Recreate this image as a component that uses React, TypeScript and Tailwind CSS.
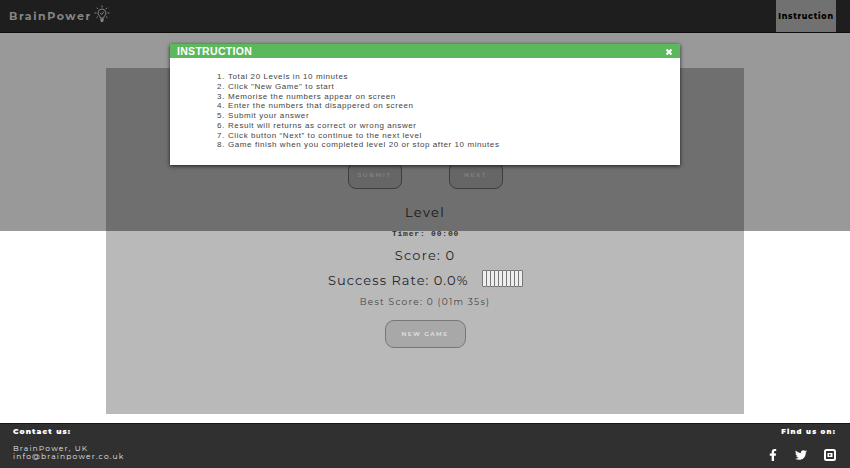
import React from "react";
import { FaFacebookF, FaTwitter } from "react-icons/fa";

const instructions = [
  "Total 20 Levels in 10 minutes",
  "Click \"New Game\" to start",
  "Memorise the numbers appear on screen",
  "Enter the numbers that disappered on screen",
  "Submit your answer",
  "Result will returns as correct or wrong answer",
  "Click button “Next” to continue to the next level",
  "Game finish when you completed level 20 or stop after 10 minutes",
];

function Bulb() {
  return (
    <svg viewBox="0 0 16 18" className="ml-[2px] h-[18px] w-4" fill="none" stroke="currentColor" strokeWidth="1">
      <path d="M8 4a4 4 0 0 0-2.5 7.1c.6.5.8 1 .8 1.9h3.4c0-.9.2-1.4.8-1.9A4 4 0 0 0 8 4Z" />
      <path d="m6.2 8 1.4 1.5L10 6.5" />
      <path d="M8 .5v2M2.8 2.7l1.4 1.4M13.2 2.7l-1.4 1.4M.5 8h2M15.5 8h-2M2.5 12.7 4 11.6M13.5 12.7 12 11.6" />
      <path d="M6.3 14.5h3.4M6.8 16h2.4" strokeWidth="1.8" />
    </svg>
  );
}

function Header() {
  return (
    <header className="flex h-[33px] shrink-0 justify-between border-b border-[#171717] bg-[#323232] pl-[9px] pr-[14px]">
      <div className="flex items-center pb-1 text-[#dedede]">
        <span className="w-[83px] whitespace-nowrap pt-1 text-[11px] font-bold leading-none tracking-[1.55px]">BrainPower</span>
        <Bulb />
      </div>
      <nav className="flex w-[60px] items-center justify-center bg-[#bdbdbd] text-[8px] font-extrabold tracking-[0.75px] text-black">
        <span className="whitespace-nowrap">Instruction</span>
      </nav>
    </header>
  );
}

function Game() {
  return (
    <main className="mx-auto mt-[35px] flex h-[346px] w-[638px] shrink-0 flex-col items-center bg-[#b9b9b9] text-[#252525]">
      <div className="mt-[94px] flex gap-[47px] text-[6px] font-semibold tracking-[1.65px] text-[#d8d8d8]">
        <button className="h-[27px] w-[54px] rounded-[8px] border border-[#686868] bg-[#aaa]">SUBMIT</button>
        <button className="h-[27px] w-[54px] rounded-[8px] border border-[#686868] bg-[#aaa]">NEXT</button>
      </div>
      <p className="mt-[15px] h-4 text-[13px] leading-4 tracking-[1.3px]">Level</p>
      <p className="mt-[8px] h-3 pl-px font-['Liberation_Mono',monospace] text-[8px] font-bold leading-3 tracking-[0.8px] text-[#333]">Timer: 00:00</p>
      <p className="mt-[7px] h-4 text-[13px] leading-4 tracking-[1.2px]">Score: 0</p>
      <div className="mt-[9px] flex h-4 items-center">
        <span className="w-[154px] whitespace-nowrap text-[13px] leading-4 tracking-[1.05px]">Success Rate: 0.0%</span>
        <div className="mt-[-3px] flex">
          {Array.from({ length: 10 }, (_, i) => (
            <span key={i} className="-mr-px h-[17px] w-[5px] rounded-[1px] border border-[#777] bg-[#eee]" />
          ))}
        </div>
      </div>
      <p className="mt-[8px] h-3 text-[9px] leading-3 tracking-[1.25px] text-[#444]">Best Score: 0 (01m 35s)</p>
      <button className="mt-[12px] h-7 w-[81px] rounded-[9px] border border-[#777] bg-[#a8a8a8] text-[6px] font-semibold tracking-[1.35px] text-[#e0e0e0]">NEW GAME</button>
    </main>
  );
}

function Footer() {
  return (
    <footer className="mt-[9px] flex h-[45px] shrink-0 justify-between border-t border-[#151515] bg-[#303030] pl-[13px] pr-[14px] text-white">
      <div className="text-[7.5px] tracking-[1.2px]">
        <h2 className="mt-[3px] text-[7.5px] font-black leading-[10px] tracking-[1.1px]">Contact us:</h2>
        <p className="mt-[8px] whitespace-nowrap leading-[8px] text-[#e5e5e5]">BrainPower, UK<br />info@brainpower.co.uk</p>
      </div>
      <div className="flex flex-col items-end">
        <h2 className="mt-[3px] whitespace-nowrap text-[7px] font-black leading-[10px] tracking-[1.2px]">Find us on:</h2>
        <div className="mt-[12px] flex w-[67px] items-center justify-between">
          <FaFacebookF size={12} className="w-[8px]" />
          <FaTwitter size={12} />
          <svg viewBox="0 0 12 12" className="h-3 w-3"><rect x="1" y="1" width="10" height="10" rx="1.5" fill="none" stroke="white" strokeWidth="2" /><path fill="white" d="M3.5 4h5v4h-5z" /><path fill="#303030" d="m5.2 4.8 2 1.2-2 1.2Z" /></svg>
        </div>
      </div>
    </footer>
  );
}

export default function App() {
  return (
    <div className="relative flex h-[468px] w-[850px] flex-col overflow-hidden bg-white font-['Montserrat',Inter,sans-serif]">
      <Header />
      <Game />
      <Footer />
      <div className="absolute inset-x-0 top-0 h-[231px] bg-black/40">
        <section className="ml-[170px] mt-[44px] h-[121px] w-[510px] bg-white font-['Liberation_Sans',Arial,sans-serif] shadow-[0_1px_4px_rgba(0,0,0,0.75)]">
          <div className="flex h-[14px] items-center justify-between bg-[#5cb85c] pl-[7px] pr-[7px] text-white">
            <h1 className="text-[10.5px] font-bold leading-[14px] tracking-[0.3px]">INSTRUCTION</h1>
            <button aria-label="Close" className="pt-[2px]">
              <svg viewBox="0 0 8 8" className="h-2 w-2" stroke="white" strokeWidth="2"><path d="m1.5 1.5 5 5m0-5-5 5" /></svg>
            </button>
          </div>
          <ol className="ml-[47px] mt-[14px] text-[8px] leading-[9.75px] tracking-[0.58px] text-[#444]">
            {instructions.map((text, i) => (
              <li key={text} className="flex whitespace-nowrap"><span className="w-[11px]">{i + 1}.</span><span>{text}</span></li>
            ))}
          </ol>
        </section>
      </div>
    </div>
  );
}
